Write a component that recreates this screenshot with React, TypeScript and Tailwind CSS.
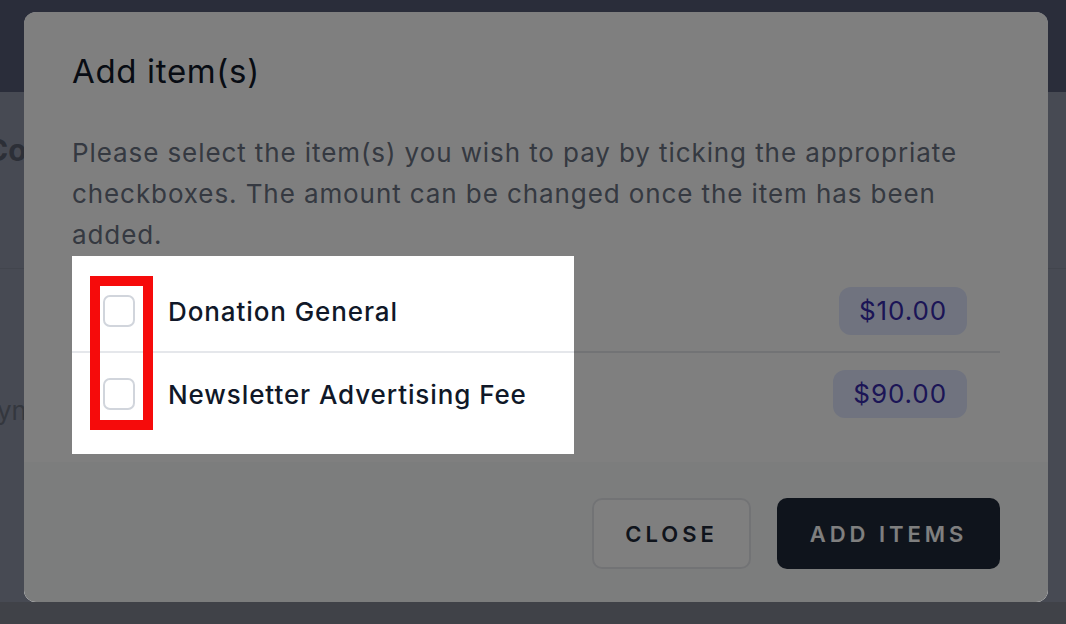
import React from "react";

function Row({ label, price, border }: { label: string; price: string; border?: boolean }) {
  return (
    <div className={`flex h-[82px] items-center pl-[31px] pr-[33px] ${border ? "border-b-2 border-gray-200" : ""}`}>
      <span className="h-[32px] w-[32px] shrink-0 rounded-[7px] border-2 border-gray-300 bg-white" />
      <span className="ml-[33px] flex-1 text-[26px] font-medium tracking-[0.035em] text-gray-900">{label}</span>
      <span className="rounded-xl bg-indigo-100 px-[20px] py-[6px] text-[26px] leading-[36px] tracking-[0.035em] text-indigo-800">{price}</span>
    </div>
  );
}

export default function App() {
  return (
    <div className="relative h-[624px] w-[1066px] overflow-hidden bg-[#474a53] font-['Inter',sans-serif]">
      {/* page behind the dialog */}
      <div className="flex h-full flex-col">
        <div className="h-[92px] bg-[#2a2d3a]" />
        <div className="flex flex-1 flex-col">
          <div className="ml-[-14px] mt-[36px] text-[30px] font-bold leading-[44px] text-[#2c2f37]">Co</div>
          <div className="mt-[96px] h-px bg-[#42454d]" />
          <div className="ml-[-3px] mt-[124px] text-[26px] leading-[36px] text-[#34373e]">yn</div>
          <div className="flex-1" />
          <div className="h-[22px] bg-[#404248]" />
        </div>
      </div>

      {/* dialog */}
      <div className="absolute left-6 top-3 flex h-[590px] w-[1024px] flex-col overflow-hidden rounded-xl bg-white">
        <div className="px-12 pt-[39px]">
          <h2 className="text-[33px] leading-[40px] tracking-[0.02em] text-gray-900">Add item(s)</h2>
          <p className="mt-[41px] text-[26px] leading-[41px] tracking-[0.035em] text-gray-500">
            Please select the item(s) you wish to pay by ticking the appropriate checkboxes. The amount can be changed once the item has been added.
          </p>
          <div className="mt-[16px]">
            <Row label="Donation General" price="$10.00" border />
            <Row label="Newsletter Advertising Fee" price="$90.00" />
          </div>
        </div>
        <div className="mt-[27px] flex flex-1 justify-end gap-[26px] bg-gray-50 px-12 pt-[36px]">
          <button className="h-[71px] w-[159px] rounded-[10px] border-2 border-gray-200 bg-white pt-[2px] text-[22px] font-semibold tracking-[0.18em] text-gray-800">
            CLOSE
          </button>
          <button className="h-[71px] w-[223px] rounded-[10px] bg-gray-800 pt-[2px] text-[22px] font-semibold tracking-[0.18em] text-white">
            ADD ITEMS
          </button>
        </div>

        {/* spotlight */}
        <div className="absolute left-[48px] top-[244px] h-[198px] w-[502px] shadow-[0_0_0_2000px_rgba(0,0,0,0.5)]" />
        <div className="absolute left-[66px] top-[264px] h-[154px] w-[63px] border-[10px] border-[#f60b0b]" />
      </div>
    </div>
  );
}
